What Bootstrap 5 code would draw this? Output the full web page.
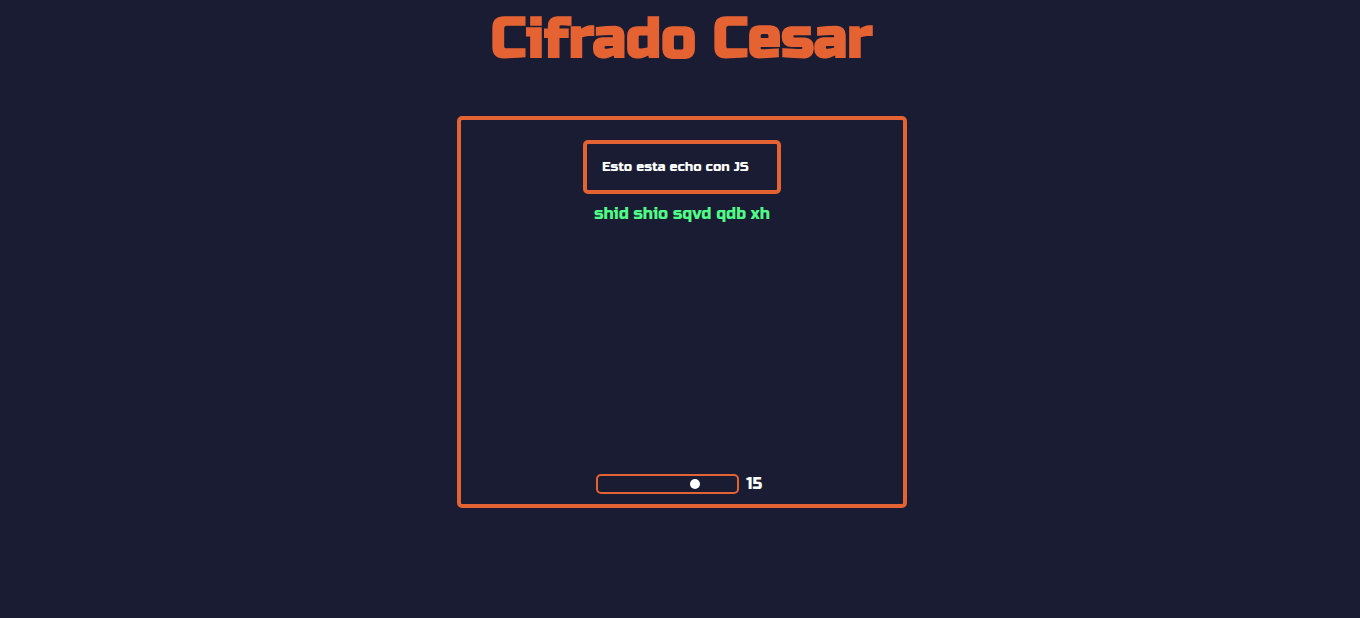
<!DOCTYPE html>
<html lang="es">
<head>
<meta charset="utf-8">
<meta name="viewport" content="width=device-width, initial-scale=1">
<title>Cifrado Cesar</title>
<link href="https://cdn.jsdelivr.net/npm/bootstrap@5.3.0/dist/css/bootstrap.min.css" rel="stylesheet">
<style>
:root { --ink: #1a1c33; --accent: #e56233; }
body { background: var(--ink); color: #fff; font-family: "Russo One", "Roboto", "DejaVu Sans", sans-serif; font-weight: 400; }
.page-title { color: var(--accent); font-size: 56px; line-height: 78px; font-weight: 700; }
.cipher-box { width: 450px; min-height: 392px; margin-top: 38px; padding: 20px 16px 10px; border: 4px solid var(--accent); border-radius: 5px; }
.plain-input { width: 198px; height: 54px; padding: 0 15px; border: 4px solid var(--accent); border-radius: 5px; background: transparent; color: #fff; font-size: smaller; }
.cipher-text { color: #50fa86; font-size: 16px; line-height: 20px; margin-top: 10px; }
.shift-range { appearance: none; width: 143px; height: 20px; border: 2px solid var(--accent); border-radius: 5px; background: transparent; }
.shift-range::-webkit-slider-thumb { appearance: none; width: 10px; height: 10px; border-radius: 50%; background: #fff; }
.shift-control { gap: 7px; }
.shift-value { min-width: 22px; font-size: 16px; line-height: 20px; }
</style>
</head>
<body class="d-flex flex-column align-items-center ps-1">
<h1 class="page-title mb-0 text-center">Cifrado Cesar</h1>
<main class="cipher-box mw-100 d-flex flex-column align-items-center">
<input class="plain-input" type="text" aria-label="Mensaje" value="Esto esta echo con JS">
<p class="cipher-text mb-0">shid shio sqvd qdb xh</p>
<div class="shift-control d-flex align-items-center mt-auto">
<input class="shift-range m-0" id="shift" type="range" min="0" max="21" value="15">
<label class="shift-value" for="shift">15</label>
</div>
</main>
<script src="https://cdn.jsdelivr.net/npm/bootstrap@5.3.0/dist/js/bootstrap.bundle.min.js"></script>
</body>
</html>
